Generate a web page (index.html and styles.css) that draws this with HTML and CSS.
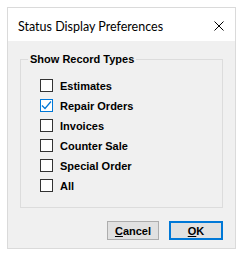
FILE: index.html
```html
<!DOCTYPE html>
<html lang="en">
<head>
  <meta charset="UTF-8">
  <title>Status Display Preferences</title>
  <link rel="stylesheet" href="styles.css">
</head>
<body>
  <div class="dialog">
    <div class="titlebar">
      <span class="title">Status Display Preferences</span>
      <svg class="close" width="10" height="10" viewBox="0 0 10 10">
        <path d="M0.5 0.5 L9.5 9.5 M9.5 0.5 L0.5 9.5" stroke="#000" stroke-width="1" fill="none"/>
      </svg>
    </div>
    <div class="content">
      <fieldset class="group">
        <legend>Show Record Types</legend>
        <div class="option"><span class="box"></span>Estimates</div>
        <div class="option"><span class="box checked">
          <svg width="11" height="11" viewBox="0 0 11 11"><path d="M1 5.5 L4 8.5 L10 1.5" stroke="#0078d7" stroke-width="1.2" fill="none"/></svg>
        </span>Repair Orders</div>
        <div class="option"><span class="box"></span>Invoices</div>
        <div class="option"><span class="box"></span>Counter Sale</div>
        <div class="option"><span class="box"></span>Special Order</div>
        <div class="option"><span class="box"></span>All</div>
      </fieldset>
      <div class="buttons">
        <button class="btn"><u>C</u>ancel</button>
        <button class="btn default"><u>O</u>K</button>
      </div>
    </div>
  </div>
</body>
</html>
```

FILE: styles.css
```css
body {
  margin: 0;
  background-color: #fff;
  font-family: "Liberation Sans", Arial, sans-serif;
}
.dialog {
  margin: 7px;
  width: 227px;
  height: 240px;
  border: 1px solid #dadada;
  display: flex;
  flex-direction: column;
}
.titlebar {
  height: 33px;
  box-sizing: border-box;
  background-color: #fff;
  display: flex;
  align-items: center;
  justify-content: space-between;
  padding: 3px 10px 0 10px;
}
.title {
  font-family: Lato, sans-serif;
  font-size: 12.5px;
  color: #000;
}
.close {
  margin-right: 1px;
}
.content {
  flex: 1;
  background-color: #f0f0f0;
  padding: 12px 12px 0 12px;
}
.group {
  margin: 0;
  border: 1px solid #dcdcdc;
  padding: 14px 0 7px 7px;
  height: 155px;
  box-sizing: border-box;
  display: flex;
  flex-direction: column;
  gap: 7px;
}
.group legend {
  font-weight: bold;
  font-size: 11px;
  padding: 0 2px;
  color: #000;
}
.option {
  display: flex;
  align-items: center;
  gap: 7px;
  margin-left: 12px;
  font-size: 11px;
  font-weight: bold;
  height: 13px;
  color: #000;
}
.box {
  width: 11px;
  height: 11px;
  border: 1px solid #333;
  background-color: #fff;
  display: flex;
  align-items: center;
  justify-content: center;
}
.box.checked {
  border-color: #0078d7;
}
.buttons {
  display: flex;
  justify-content: flex-end;
  gap: 10px;
  margin-top: 13px;
}
.btn {
  font-family: "Liberation Sans", Arial, sans-serif;
  font-size: 11px;
  font-weight: bold;
  background-color: #e1e1e1;
  border: 1px solid #adadad;
  width: 52px;
  height: 19px;
  padding: 0;
  color: #000;
}
.btn.default {
  width: 54px;
  border: 2px solid #0078d7;
}
```
